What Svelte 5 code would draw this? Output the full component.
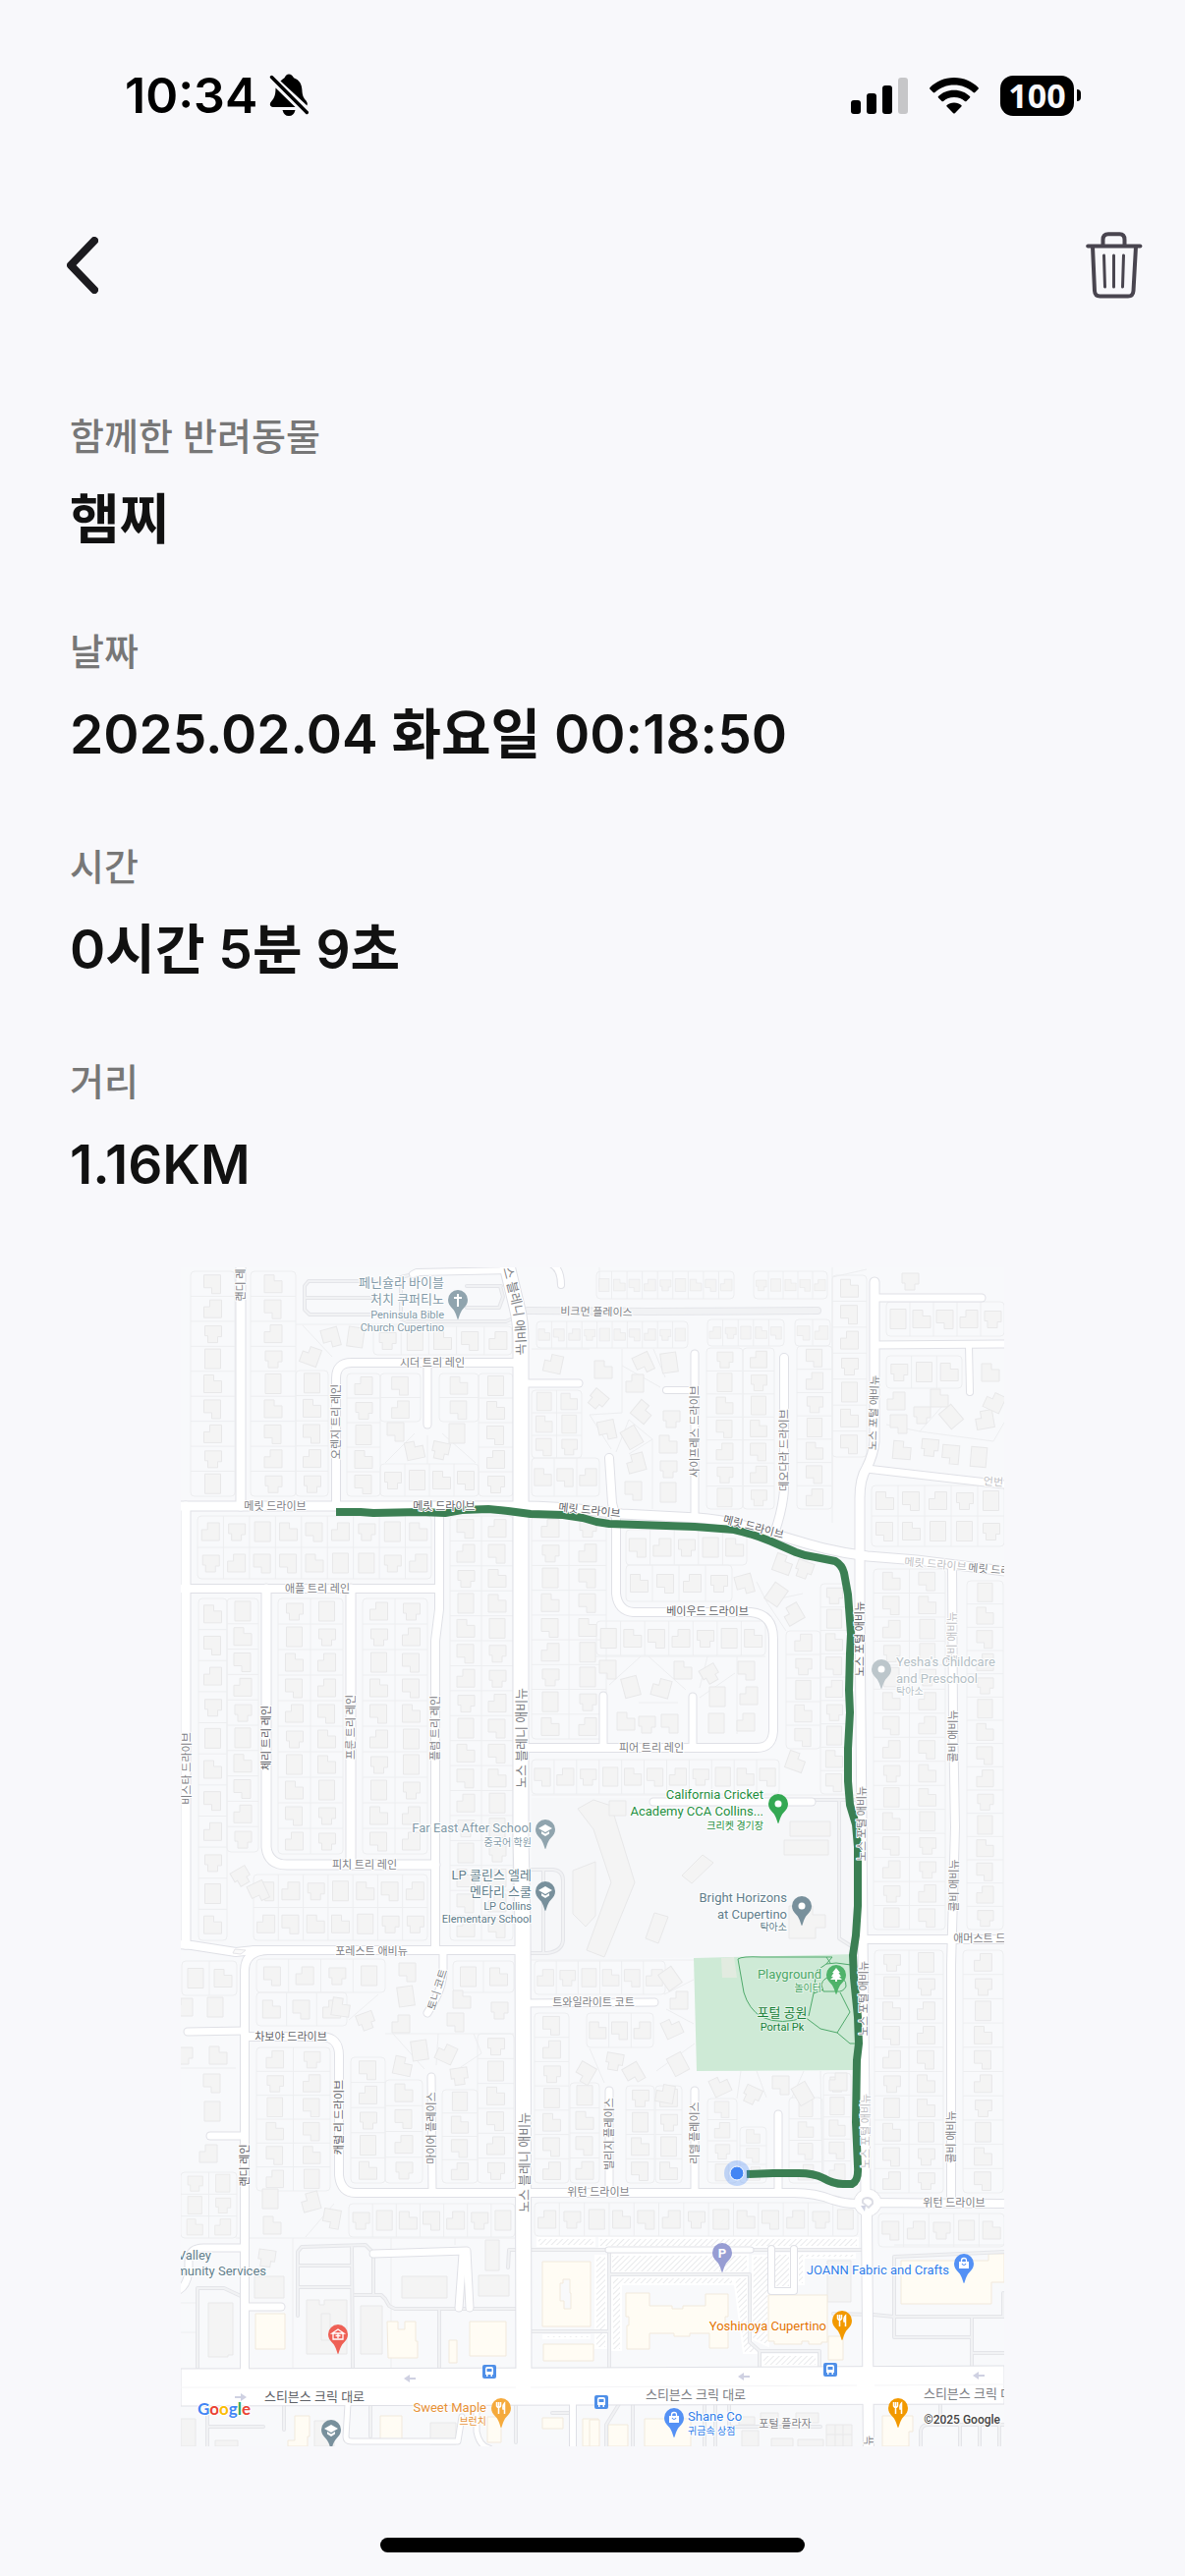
<script>
  const details = [
    { label: '함께한 반려동물', value: '햄찌' },
    { label: '날짜', value: '2025.02.04 화요일 00:18:50' },
    { label: '시간', value: '0시간 5분 9초' },
    { label: '거리', value: '1.16KM' }
  ];

  // Streets: [path, width]
  const streets = [
    ['M245 1280V1533', 9],
    ['M180 1533H530C580 1533 600 1538 633 1541L710 1545C740 1547 770 1556 800 1565C830 1574 850 1580 883 1584L933 1588L1030 1600', 9],
    ['M342 1533V1403Q342 1387 358 1387H530', 8],
    ['M435 1387V1450', 7],
    ['M514 1280L526 1330Q530 1345 530 1365V1870L532 1960L533 2430', 15],
    ['M420 1297L424 1295L518 1293', 6],
    ['M560 1286Q571 1290 571 1308', 6],
    ['M530 1408H589', 7],
    ['M707 1378V1545', 7],
    ['M678 1415H707', 6],
    ['M798 1382V1515Q797 1535 788 1561', 8],
    ['M620 1484L623 1530L627 1545V1622Q629 1640 645 1641H764Q787 1643 787 1668V1762Q786 1779 770 1779H530', 8],
    ['M614 1726V1779', 7],
    ['M705 1727V1779', 7],
    ['M890 1305V1467Q889 1480 882 1494Q875 1505 875 1525V1640L876 1750L878 1970L881 2230', 9],
    ['M890 1321H999', 7],
    ['M890 1369L1030 1368', 7],
    ['M986 1369L987 1417', 6],
    ['M882 1495L1030 1512', 7],
    ['M189 1533V1979', 9],
    ['M184 1617H446', 8],
    ['M271 1617V1880Q273 1898 292 1898H443', 9],
    ['M357 1617V1898', 9],
    ['M447 1533V1638L443 1670V1985', 8],
    ['M180 1979L195 1980L240 1987L258 1985H532', 8],
    ['M272 1985Q249 1986 249 2006V2415', 8],
    ['M191 2068L249 2067', 7],
    ['M214 2174H249', 7],
    ['M249 2073H328Q345 2074 345 2092V2214Q347 2232 362 2232H808Q830 2232 847 2239Q865 2245 883 2242L1030 2243', 8],
    ['M451 1985V2008Q450 2026 435 2049', 7],
    ['M439 2114L440 2232', 7],
    ['M532 2039L666 2038', 7],
    ['M665 1834H826', 7],
    ['M880 1974H1030', 8],
    ['M969 1596L970 1750L972 1860L968 2000L968 2242', 8],
    ['M620 2128V2232', 7],
    ['M707 2128V2232', 7],
    ['M792 2152V2232', 7],
    ['M882 2250L884 2500', 10],
    ['M249 2288H207Q192 2288 192 2302V2312Q190 2328 180 2332', 7],
    ['M252 2348H286', 7],
    ['M380 2294L475 2291L478 2349', 7],
    ['M471 2294L467 2349', 7],
    ['M619 2290H764', 5],
    ['M785 2289V2332H808V2289', 6],
    ['M354 2447L352 2480Q352 2485 358 2485H466L470 2460', 5],
    ['M485 2447V2475Q488 2490 498 2492', 5],
    ['M583 2447V2500', 6]
  ];

  // Driveways and parking lanes
  const lanes = [
    'M380 1304H314L310 1309V1333L315 1338H380M311 1321H380M420 1297L408 1300V1342L414 1345H515L522 1342',
    'M475 1309H510M475 1331H508L512 1320L509 1309',
    'M540 1903H563Q573 1904 573 1914V1975Q572 1986 557 1988H540M553 1903V1988',
    'M828 1832H872M854 1834V1973L868 1982',
    'M201 2410V2329H228L245 2337',
    'M303 2357V2292L307 2287L372 2285L380 2293V2335M303 2306H358M303 2328H358M358 2287L359 2410',
    'M361 2336H388L392 2340L396 2347L402 2350H526M447 2350V2410',
    'M517 2308L518 2290H880M541 2373H620M620 2290V2410M620 2315H763V2384L773 2393H834V2410M773 2393V2410',
    'M848 2355L889 2356L910 2358H1022M910 2358V2297L1022 2292M910 2358V2379H989M989 2358V2409M989 2395H1022M1021 2334V2358',
    'M211 2448V2490M211 2470H268M289 2448V2473M377 2448V2480M525 2448V2486M562 2456H580',
    'M644 2447V2490M630 2447L617 2468V2490M717 2447V2490M728 2447V2490M742 2447V2470H835M957 2447V2468M937 2490V2474Q938 2468 945 2468H1022M977 2468V2490M997 2468V2490M1017 2468V2490'
  ];

  // Parcel blocks: [x0, y0, x1, y1, columns, rows]
  const blocks = [
    [194, 1294, 239, 1523, 1, 9], [255, 1294, 301, 1523, 1, 9], [301, 1395, 334, 1523, 1, 5],
    [380, 1350, 521, 1379, 5, 1], [353, 1398, 387, 1523, 1, 5], [387, 1398, 428, 1447, 1, 2],
    [447, 1398, 487, 1447, 1, 2], [487, 1398, 522, 1523, 1, 5], [387, 1490, 487, 1523, 4, 1],
    [201, 1543, 439, 1607, 9, 2], [458, 1543, 522, 1975, 2, 17],
    [202, 1627, 231, 1975, 1, 11], [231, 1627, 263, 1885, 1, 10],
    [283, 1627, 349, 1887, 2, 10], [369, 1627, 435, 1887, 2, 10], [258, 1908, 435, 1975, 7, 2],
    [546, 1345, 700, 1372, 10, 1], [607, 1294, 747, 1322, 9, 1], [767, 1294, 842, 1322, 5, 1],
    [720, 1343, 798, 1370, 5, 1], [809, 1343, 845, 1370, 2, 1], [541, 1484, 610, 1523, 3, 1],
    [541, 1415, 592, 1484, 2, 3], [719, 1372, 756, 1536, 1, 7], [756, 1372, 788, 1536, 1, 7],
    [811, 1370, 847, 1536, 1, 7], [847, 1298, 882, 1483, 1, 7], [902, 1325, 1022, 1360, 5, 1],
    [902, 1380, 979, 1413, 3, 1], [541, 1543, 617, 1770, 2, 9], [637, 1557, 760, 1593, 5, 1],
    [637, 1593, 745, 1630, 4, 1], [607, 1650, 779, 1685, 7, 1], [835, 1612, 863, 1826, 1, 9],
    [800, 1660, 835, 1780, 1, 5], [541, 1791, 793, 1826, 11, 1], [889, 1597, 962, 1964, 2, 15],
    [984, 1609, 1021, 1964, 1, 15], [890, 1985, 960, 2232, 2, 10], [980, 1985, 1021, 2232, 1, 10],
    [261, 1994, 392, 2028, 4, 1], [261, 2028, 353, 2062, 3, 1], [461, 1996, 523, 2028, 2, 1],
    [486, 2070, 523, 2222, 1, 6], [261, 2084, 336, 2230, 2, 6], [357, 2094, 392, 2222, 1, 5],
    [392, 2117, 430, 2222, 1, 4], [450, 2127, 486, 2222, 1, 4], [355, 2243, 524, 2277, 7, 1],
    [544, 1996, 677, 2030, 6, 1], [544, 2049, 579, 2222, 1, 7], [597, 2049, 665, 2084, 3, 1],
    [580, 2120, 610, 2222, 1, 4], [637, 2123, 666, 2222, 1, 4], [667, 2123, 694, 2222, 1, 4],
    [720, 2136, 750, 2222, 1, 4], [753, 2165, 780, 2222, 1, 3], [803, 2135, 837, 2222, 1, 4],
    [838, 2110, 866, 2222, 1, 5], [544, 2242, 873, 2276, 13, 1], [894, 2253, 1022, 2287, 5, 1],
    [887, 1512, 1022, 1574, 5, 2], [185, 1996, 241, 2031, 2, 1], [184, 2211, 241, 2278, 2, 3]
  ];

  // Detached houses on irregular lots: [x, y, rotation]
  const loose = [
    [337, 1361, -15], [362, 1361, 8], [316, 1380, 20], [422, 1476, -12], [448, 1476, 12], [403, 1457, 0], [465, 1459, 0],
    [563, 1388, 12], [614, 1394, 0], [608, 1424, 40], [655, 1387, -25], [681, 1387, -8], [646, 1408, 0], [654, 1437, 40],
    [683, 1444, 0], [618, 1455, -12], [643, 1463, -30], [647, 1489, -15], [680, 1470, 0], [680, 1495, 0], [645, 1517, 0],
    [680, 1519, 0], [912, 1426, 0], [956, 1423, 0], [938, 1440, 0], [915, 1449, 0], [968, 1442, -40], [1002, 1445, -10],
    [918, 1476, 5], [946, 1473, 5], [968, 1480, 5], [996, 1483, 5], [1012, 1427, 25], [1008, 1397, 0], [926, 1304, 0],
    [758, 1612, -15], [790, 1623, 35], [807, 1643, -30], [797, 1592, 20], [818, 1597, 20], [619, 1699, 0], [642, 1717, -15],
    [673, 1718, 15], [695, 1700, 0], [722, 1704, -30], [760, 1700, 0], [730, 1727, 0], [762, 1726, 0], [637, 1752, 0],
    [658, 1755, 0], [682, 1754, 0], [729, 1754, 0], [759, 1753, 0], [810, 1793, 20], [245, 1910, -30], [263, 1925, -25],
    [219, 2043, 0], [187, 2043, 0], [222, 2092, 0], [187, 2092, 0], [216, 2120, 0], [216, 2149, 0], [212, 2192, 0],
    [347, 2043, 8], [372, 2057, -20], [415, 2007, 0], [413, 2032, -8], [408, 2060, 0], [470, 2035, 0], [508, 2046, 0],
    [464, 2058, 0], [427, 2087, -8], [454, 2090, 25], [410, 2103, 12], [467, 2113, -8], [596, 2110, 30], [275, 2238, 0],
    [316, 2241, -15], [277, 2265, 0], [271, 2298, 8], [338, 2258, 10], [682, 2014, -35], [691, 2036, 0], [684, 2064, -25],
    [625, 2098, 10], [645, 2110, -30], [690, 2101, -28], [677, 2131, 10], [733, 2123, -25], [765, 2132, 25],
    [795, 2122, 0], [817, 2131, -30], [853, 2119, 0]
  ];

  const houseShapes = [
    'M-9 -9H8V10H-1V4H-9Z',
    'M-8 -10H8V10H-8Z',
    'M-9 -2H-3V-9H9V9H-9Z',
    'M-9 -9H1V-3H9V9H-9Z',
    'M-8 -8H9V3H5V9H-5V2H-8Z'
  ];

  const houses = [];
  const parcels = [];
  blocks.forEach(([x0, y0, x1, y1, cols, rows], b) => {
    const cw = (x1 - x0) / cols;
    const ch = (y1 - y0) / rows;
    let d = '';
    for (let c = 1; c < cols; c++) d += `M${x0 + c * cw} ${y0}V${y1}`;
    for (let r = 1; r < rows; r++) d += `M${x0} ${y0 + r * ch}H${x1}`;
    parcels.push({ x: x0, y: y0, w: x1 - x0, h: y1 - y0, d });
    for (let c = 0; c < cols; c++) {
      for (let r = 0; r < rows; r++) {
        const s = Math.min(1, cw / 24, ch / 25);
        houses.push({
          t: `translate(${x0 + (c + 0.5) * cw} ${y0 + (r + 0.5) * ch}) scale(${s})`,
          d: houseShapes[(b * 3 + c * 2 + r * 7 + ((r * c) % 3)) % 5]
        });
      }
    }
  });
  loose.forEach(([x, y, a], i) => houses.push({ t: `translate(${x} ${y}) rotate(${a})`, d: houseShapes[i % 5] }));

  const grayBuildings = [
    'M588 1841L604 1832L622 1838L646 1916L615 1992L597 1985L622 1916L604 1862Z',
    'M583 1904L606 1895L606 1950L596 1961L583 1948Z',
    'M620 1833H637V1848H620ZM804 1854H845V1869H804ZM798 1873H843V1888H798Z',
    'M694 1909L715 1888L726 1896L704 1917Z',
    'M666 1947L680 1951L670 1978L657 1973Z',
    'M803 1940H827V1949H840V1962H830V1973H803Z',
    'M212 2344H237V2397H232V2399H212ZM259 2317H289V2339H259Z',
    'M312 2341H325V2346H330V2341H353V2396H312ZM327 2355H336V2382H327Z',
    'M367 2347H389V2396H367ZM409 2317H455V2339H409ZM494 2280H508V2311H494ZM487 2316H518V2337H487Z',
    'M184 2462H199V2490H184ZM320 2464H340V2490H320ZM438 2466H464V2488H438ZM219 2484H242V2490H219Z',
    'M842 2301H866V2343H842Z',
    'M752 2460H768V2468H752ZM774 2456H792V2466H774ZM810 2456H833V2466H810ZM755 2474H772V2490H755ZM785 2482H807V2490H785ZM812 2483H838V2490H812ZM841 2468H867V2490H841ZM841 2478H867M850 2468V2490M858 2468V2490'
  ];

  const shops = [
    'M260 2355H290V2391H260Z',
    'M394 2363H405V2371H412V2363H423V2383H425V2400H395Z',
    'M478 2363H515V2398H478ZM457 2382H465V2405H457Z',
    'M552 2302H601V2368H552ZM573 2320H580V2334H581V2350H574V2342H570V2324H573Z',
    'M553 2386H604V2403H553Z',
    'M300 2459H315V2480H313V2490H293V2484H300ZM387 2459H409V2485H387ZM496 2460H510V2486H496ZM552 2461H573V2472H552ZM593 2462H609V2490H593Z',
    'M637 2334H661V2347H684V2350H695V2347H718V2335H741V2358H738V2367H741V2390H722V2375H702V2378H686V2375H661V2391H638V2367H640V2358H637Z',
    'M782 2336H842V2384H836V2386H823V2383H816V2386H788V2383H782ZM843 2378H858V2402H843Z',
    'M917 2301H1006V2294H1022V2323H1009V2345H917Z',
    'M656 2462H703V2490H656ZM619 2468H639V2490H619ZM600 2463H610V2490H600ZM898 2459H929V2475H925V2490H898Z'
  ];

  const parking = 'M547 2278H605V2286H547ZM610 2278H873V2287H610ZM622 2295H761V2313H622ZM606 2296H617V2390H606ZM623 2318H746V2325H632V2392H623ZM747 2318H761V2372L770 2395H757ZM766 2296H782V2388L765 2380ZM788 2294H804V2328H788ZM812 2294H870V2298H818V2325H812ZM776 2397H831V2408H776ZM553 2377H600V2380H553Z';

  // Street names: [text, x, y, rotation, tone]
  const names = [
    ['랜디 레', 245, 1308, -90, 'mid'], ['시더 트리 레인', 440, 1387, 0, 'mid'], ['비크먼 플레이스', 607, 1335, 1, 'mid'],
    ['오렌지 트리 레인', 342, 1447, -90, 'mid'], ['메릿 드라이브', 280, 1533, 0, 'mid'], ['메릿 드라이브', 452, 1533, 0, 'dark'],
    ['메릿 드라이브', 600, 1537, 6, 'dark'], ['메릿 드라이브', 767, 1554, 15, 'dark'], ['사이프레스 드라이브', 707, 1457, -90, 'mid'],
    ['데오다라 드라이브', 798, 1476, -90, 'mid'], ['노스 포털 애비뉴', 889, 1438, -88, 'mid'], ['애플 트리 레인', 323, 1617, 0, 'mid'],
    ['체리 트리 레인', 271, 1769, -90, 'dark'], ['프룬 트리 레인', 357, 1758, -90, 'mid'], ['플럼 트리 레인', 443, 1759, -90, 'mid'],
    ['비스타 드라이브', 190, 1800, -90, 'mid'], ['베이우드 드라이브', 720, 1640, 0, 'dark'], ['피어 트리 레인', 663, 1779, 0, 'mid'],
    ['메릿 드라이브', 952, 1592, 5, 'faint'], ['메릿 드라이브', 1017, 1598, 5, 'mid'], ['언번', 1011, 1508, 4, 'faint'],
    ['노스 포털 애비뉴', 875, 1668, -90, 'dark'], ['노스 포털 애비뉴', 877, 1856, -90, 'mid'], ['노스 포털 애비뉴', 879, 2034, -90, 'mid'],
    ['노스 포털 애비뉴', 881, 2169, -90, 'faint'], ['콜비 애비뉴', 969, 1667, -90, 'faint'], ['콜비 애비뉴', 970, 1767, -90, 'mid'],
    ['콜비 애비뉴', 971, 1919, -90, 'mid'], ['콜비 애비뉴', 968, 2175, -90, 'mid'], ['피치 트리 레인', 371, 1898, 0, 'mid'],
    ['포레스트 애비뉴', 378, 1986, 0, 'mid'], ['토니 코트', 445, 2025, -72, 'mid'], ['트와일라이트 코트', 604, 2038, 0, 'mid'],
    ['차보야 드라이브', 296, 2073, 0, 'dark'], ['캐럴 리 드라이브', 345, 2155, -90, 'dark'], ['랜디 레인', 249, 2204, -90, 'dark'],
    ['마이어 플레이스', 439, 2166, -90, 'mid'], ['빌리지 플레이스', 620, 2172, -90, 'mid'], ['리델 플레이스', 707, 2171, -90, 'mid'],
    ['위턴 드라이브', 609, 2231, 0, 'mid'], ['위턴 드라이브', 971, 2242, 0, 'mid'], ['애머스트 드라이브', 1012, 1973, 0, 'mid'],
    ['포털 플라자', 799, 2467, 0, 'mid'], ['뉴', 884, 2484, -90, 'mid']
  ];

  const bigNames = [
    ['노스 블레니 애비뉴', 530, 1769, -90, 'mid'], ['노스 블레니 애비뉴', 533, 2201, -90, 'mid'],
    ['스티븐스 크릭 대로', 320, 2439, 0, 'dark'], ['스티븐스 크릭 대로', 708, 2437, 0, 'mid'], ['스티븐스 크릭 대로', 991, 2436, 0, 'mid']
  ];

  const pins = [
    { x: 466, y: 1323, c: '#90a4ae', i: 'cross' }, { x: 555, y: 1862, c: '#90a4ae', i: 'cap' },
    { x: 555, y: 1925, c: '#78909c', i: 'cap' }, { x: 792, y: 1836, c: '#34a853', i: 'dot' },
    { x: 897, y: 1699, c: '#bcc6cb', i: 'dot' }, { x: 816, y: 1940, c: '#78909c', i: 'dot' },
    { x: 851, y: 2010, c: '#4fb36a', i: 'tree' }, { x: 344, y: 2376, c: '#ee6055', i: 'care' },
    { x: 510, y: 2451, c: '#f5aa3c', i: 'fork' }, { x: 337, y: 2473, c: '#78909c', i: 'cap' },
    { x: 735, y: 2293, c: '#979dd3', i: 'park' }, { x: 981, y: 2304, c: '#5491f5', i: 'bag' },
    { x: 857, y: 2362, c: '#f29900', i: 'fork' }, { x: 914, y: 2451, c: '#f29900', i: 'fork' },
    { x: 686, y: 2461, c: '#5491f5', i: 'bag' }
  ];

  // Place labels: [text, x, baseline, anchor, size, colour]
  const places = [
    ['페닌슐라 바이블', 452, 1310, 'end', 'lg', '#829aa8'], ['처치 쿠퍼티노', 452, 1327, 'end', 'lg', '#829aa8'],
    ['Peninsula Bible', 452, 1342, 'end', 'md', '#829aa8'], ['Church Cupertino', 452, 1355, 'end', 'md', '#829aa8'],
    ['Far East After School', 541, 1865, 'end', 'lg', '#829aa8'], ['중국어 학원', 541, 1879, 'end', 'sm', '#829aa8'],
    ['LP 콜린스 엘레', 541, 1913, 'end', 'lg', '#607d8b'], ['멘타리 스쿨', 541, 1930, 'end', 'lg', '#607d8b'],
    ['LP Collins', 541, 1944, 'end', 'md', '#607d8b'], ['Elementary School', 541, 1957, 'end', 'md', '#607d8b'],
    ['California Cricket', 777, 1831, 'end', 'lg', '#1e8e3e'], ['Academy CCA Collins...', 777, 1848, 'end', 'lg', '#1e8e3e'],
    ['크리켓 경기장', 777, 1862, 'end', 'sm', '#1e8e3e'],
    ["Yesha's Childcare", 912, 1696, 'start', 'lg', '#b4c0c6'], ['and Preschool', 912, 1713, 'start', 'lg', '#b4c0c6'],
    ['탁아소', 912, 1725, 'start', 'sm', '#b4c0c6'],
    ['Bright Horizons', 801, 1936, 'end', 'lg', '#607d8b'], ['at Cupertino', 801, 1953, 'end', 'lg', '#607d8b'],
    ['탁아소', 801, 1965, 'end', 'sm', '#607d8b'],
    ['Playground', 836, 2014, 'end', 'lg park', '#4ba766'], ['놀이터', 836, 2027, 'end', 'sm park', '#4ba766'],
    ['포털 공원', 796, 2053, 'middle', 'lg park', '#188038'], ['Portal Pk', 796, 2067, 'middle', 'md park', '#188038'],
    ['Valley', 215, 2300, 'end', 'lg', '#607d8b'], ['Community Services', 271, 2316, 'end', 'lg', '#607d8b'],
    ['Sweet Maple', 495, 2455, 'end', 'lg', '#e69138'], ['브런치', 495, 2468, 'end', 'sm', '#e69138'],
    ['JOANN Fabric and Crafts', 966, 2315, 'end', 'lg', '#2f7de9'], ['Yoshinoya Cupertino', 841, 2372, 'end', 'lg', '#e37400'],
    ['Shane Co', 700, 2464, 'start', 'lg', '#2f7de9'], ['귀금속 상점', 700, 2478, 'start', 'sm', '#2f7de9']
  ];

  const stops = [[498, 2414], [612, 2445], [845, 2412]];
  const arrows = [[417, 2421, 0], [245, 2440, 180], [757, 2419, 0], [996, 2418, 0]];
</script>

<div class="screen">
  <header class="status">
    <div class="clock">
      <time>10:34</time>
      <svg class="bell" viewBox="0 0 40 44" aria-label="무음">
        <path d="M11.5 7.5Q14 5.4 15.5 4.3Q17 .5 20 .5Q23.2 .5 25 4.3C31 6.5 33 11 33.4 16.5C33.6 22 35 25 37.5 27.5Q39.6 30 38.5 32.5ZM6.5 14.500L26.500 34H4Q.8 33.600 .8 31Q.8 29.500 2.500 27.800C5.500 24.500 6.500 21 6.500 14.500ZM13.500 37H26.500Q25 43 20 43Q15 43 13.500 37Z" />
        <path d="M2.5 3.5L38.300 39.500" fill="none" stroke="#000" stroke-width="3.400" stroke-linecap="round" />
      </svg>
    </div>
    <div class="radios">
      <svg class="signal" viewBox="0 0 58 37" aria-label="신호">
        <rect x="0" y="23" width="10" height="14" rx="3" />
        <rect x="16" y="16" width="10" height="21" rx="3" />
        <rect x="32" y="8" width="10" height="29" rx="3" />
        <rect x="48" y="0" width="10" height="37" rx="3" fill="#c6c6c8" />
      </svg>
      <svg class="wifi" viewBox="0 0 50 37" aria-label="Wi-Fi">
        <path d="M25 0C35 0 43.500 4 49.500 10Q50.300 11 49.500 11.800L46.300 15Q45.500 15.800 44.500 15C39 10 32.500 7.500 25 7.500S11 10 5.500 15Q4.500 15.800 3.700 15L.5 11.800Q-.3 11 .5 10C6.500 4 15 0 25 0Z" />
        <path d="M25 12.700C31.500 12.700 37 15 41 19Q41.800 19.800 41 20.600L37.500 24Q36.800 24.700 35.900 24C33 21.300 29.500 20 25 20S17 21.300 14.100 24Q13.200 24.700 12.500 24L9 20.600Q8.200 19.800 9 19C13 15 18.500 12.700 25 12.700Z" />
        <path d="M25 25.500C28 25.500 30.500 26.500 32.300 28Q33.200 28.800 32.400 29.600L25.800 36.200Q25 37 24.200 36.200L17.600 29.600Q16.800 28.800 17.700 28C19.500 26.500 22 25.500 25 25.500Z" />
      </svg>
      <div class="battery"><span class="charge">100</span><span class="nub"></span></div>
    </div>
  </header>

  <nav class="toolbar">
    <button type="button" aria-label="뒤로">
      <svg class="back" viewBox="0 0 32 58"><path d="M28 4L4 29L28 54" /></svg>
    </button>
    <button type="button" aria-label="삭제">
      <svg class="trash" viewBox="0 0 58 68">
        <path d="M2.200 14.500H55.400" />
        <path d="M17.500 13V8Q17.500 2.200 23 2.200H34.500Q39.500 2.200 39.500 8V13" />
        <path d="M7 15L9 60Q9.300 65.500 14.500 65.500H43Q48.200 65.500 48.500 60L51 15" />
        <path class="thin" d="M18.500 24L19.500 56M28.500 24V56M38.500 24L37.500 56" />
      </svg>
    </button>
  </nav>

  <main>
    <dl>
      {#each details as item}
        <div class="item">
          <dt>{item.label}</dt>
          <dd>{item.value}</dd>
        </div>
      {/each}
    </dl>

    <svg class="map" viewBox="184 1290 838 1200" role="img" aria-label="산책 경로 지도">
      <defs>
        <pattern id="hatch" width="4" height="4" patternUnits="userSpaceOnUse" patternTransform="rotate(45)">
          <rect width="4" height="4" fill="#fff" />
          <path d="M0 0V4" stroke="#e9eaec" stroke-width="2" />
        </pattern>
        <path id="blaney" d="M512 1291L520 1322Q526 1345 526 1400" />
      </defs>
      <rect x="184" y="1290" width="838" height="1200" fill="#f8f9fb" />
      <path d="M541 1830H872V1990L541 1995Z" fill="#f6f7f9" />

      {#each parcels as p}
        <rect class="parcel" x={p.x} y={p.y} width={p.w} height={p.h} rx="4" />
        <path class="parcel" d={p.d} />
      {/each}
      <path class="parcel" d="M308 1349L338 1381M301 1348H521M392 1489L422 1459M484 1489L450 1459M435 1461V1490M541 1373H600M610 1290V1310M633 1373V1438L600 1440M633 1390L672 1412M665 1373L677 1402M600 1440L622 1475M640 1445L627 1478M640 1445L664 1465V1536M664 1465L640 1480M605 1686H779M652 1686L620 1715M660 1686L698 1720M720 1686L712 1718M748 1703L712 1728M750 1686V1765M650 1733H690M800 1660L780 1630L817 1622M780 1630L770 1610M400 2070L432 2106M446 2070L444 2102M482 2070L490 2090L460 2110M392 2070H523M355 2056L385 2030M311 2277L340 2243M240 2278H524M298 2278V2410M398 2278V2410M463 2278V2285M541 1995H706M706 2015L676 2030M706 2060L678 2045M668 2108L707 2080M600 2085L615 2120M754 2108L750 2136M770 2108L780 2135M818 2108L806 2135M835 2108L837 2222M910 2285H1022M847 1290V1550M882 1292L847 1300M936 1457L960 1430M936 1457L1011 1467L1022 1448M936 1457L902 1450M541 1827H872M184 2105H240M184 2344H200M184 2374H200" />

      {#each houses as h}
        <path class="building" d={h.d} transform={h.t} />
      {/each}
      {#each grayBuildings as d}<path class="building" {d} />{/each}
      <path d={parking} fill="url(#hatch)" stroke="#fff" stroke-width="2" />
      {#each shops as d}<path class="shop" {d} fill-rule="evenodd" />{/each}

      <path d="M706 1993L870 1989V2107L709 2108Z" fill="#ceead6" />
      <path d="M734 1993L747 1992L750 2013H735Z" fill="#e2ebe0" />
      <path class="trail" d="M751 1994Q755 1991 775 1992H847L841 1999L851 1998L866 2000M841 1999L831 2006Q829 2020 828 2029L823 2052M751 1994L757 2028Q762 2045 775 2053Q796 2062 819 2053L835 2065L852 2069L865 2048L855 2028M852 2069L865 2080H870M841 1992L845 1998M836 2020Q838 2012 848 2012Q862 2012 861 2022Q858 2028 851 2027H838ZM828 2029L838 2025" />

      {#each lanes as d}<path class="lane-case" {d} />{/each}
      {#each lanes as d}<path class="lane" {d} />{/each}
      <path class="lane-case wide" d="M537 1334L660 1335L832 1334" />
      <path class="lane mid-width" d="M537 1334L660 1335L832 1334" />

      {#each streets as [d, w]}<path class="case" {d} stroke-width={w + 2} />{/each}
      <path d="M184 2411L600 2410L1022 2408V2447L184 2449Z" fill="#fff" stroke="#dfe0e6" />
      <circle cx="883" cy="2242" r="14" fill="#fff" stroke="#dfe0e6" />
      {#each streets as [d, w]}<path class="street" {d} stroke-width={w} />{/each}
      <circle cx="883" cy="2242" r="13" fill="#fff" />
      <path d="M878 2242Q877 2237 883 2237Q889 2238 888 2243L884 2247Z" fill="#fff" stroke="#dcdde5" stroke-width="2" />
      <path d="M876 2245L881 2245L880 2251Z" fill="#cfd2e2" />
      <path d="M184 2430H525M540 2430L872 2428M890 2428L1022 2427" stroke="#f4f4f6" />
      <path d="M239 1984L250 1985L245 1989L237 1988Z" fill="#fafafa" stroke="#e4e4e8" />

      {#each arrows as [x, y, a]}
        <path transform="translate({x} {y}) rotate({a})" d="M-6 0L0 -4V-1H6V1H0V4Z" fill="#cfd1e2" />
      {/each}

      <path
        class="route"
        d="M342 1539L367 1539L380 1540L427 1539L453 1540L470 1537L497 1536L517 1538L540 1541L573 1542L593 1545L607 1549L620 1551L707 1554L747 1557Q765 1561 785 1569L810 1580Q820 1584 830 1585L850 1589Q857 1593 859 1601L863 1623L866 1663L865 1683L864 1720L865 1743L863 1780V1813L865 1837L871 1857L873 1880L873 1940L871 1970L868 1990L869 2013L873 2053L874 2080L872 2097L871 2160L873 2205Q874 2220 867 2223H858Q848 2223 838 2217Q828 2212 813 2212H787L760 2213"
      />

      {#each names as [text, x, y, a, tone]}
        <text class="name {tone}" transform="translate({x} {y}) rotate({a})" dy="4">{text}</text>
      {/each}
      {#each bigNames as [text, x, y, a, tone]}
        <text class="name big {tone}" transform="translate({x} {y}) rotate({a})" dy="5">{text}</text>
      {/each}
      <text class="name big mid path-name"><textPath href="#blaney">스 블레니 애비뉴</textPath></text>

      <circle cx="750" cy="2212" r="13" fill="#4285f4" opacity=".3" />
      <circle cx="750" cy="2212" r="7" fill="#4285f4" stroke="#fff" stroke-width="1" />

      {#each stops as [x, y]}
        <g transform="translate({x} {y})">
          <rect x="-7" y="-7" width="14" height="14" rx="2" fill="#4f8fe8" />
          <path d="M-4 3V-3Q-4 -5 -2 -5H2Q4 -5 4 -3V3H3V5H1.500V3H-1.500V5H-3V3Z" fill="#fff" />
          <path d="M-2.500 -3H2.500V0H-2.500Z" fill="#4f8fe8" />
        </g>
      {/each}

      {#each pins as p}
        <g transform="translate({p.x} {p.y})">
          <path d="M0 20C-1 20 -1.500 13 -5.500 9C-8.500 6 -10 3.500 -10 0A10 10 0 0 1 10 0C10 3.500 8.500 6 5.500 9C1.500 13 1 20 0 20Z" fill={p.c} />
          {#if p.i === 'dot'}
            <circle r="3.500" fill="#fff" />
          {:else if p.i === 'cross'}
            <path d="M0 -6V7M-4 -2H4" stroke="#fff" stroke-width="2" />
          {:else if p.i === 'cap'}
            <path d="M-7 -1L0 -5L7 -1L0 3ZM-4 2L0 4.500L4 2V4.500L0 7L-4 4.500Z" fill="#fff" />
          {:else if p.i === 'tree'}
            <path d="M0 -7L4 -2H2.500L5 2H3L6 5H1V7H-1V5H-6L-3 2H-5L-2.500 -2H-4Z" fill="#fff" />
          {:else if p.i === 'care'}
            <path d="M-5 -1V5H5V-1M-6 -1L0 -5L6 -1Z" fill="none" stroke="#fff" stroke-width="1.300" />
            <path d="M0 -1V4M-2.500 1.500H2.500" stroke="#fff" stroke-width="1.300" />
          {:else if p.i === 'fork'}
            <path d="M-4.500 -6V-2Q-2.500 1 -.5 -2V-6M-2.500 -6V6M3.500 6V-5Q1.500 -3 2 1H3.500" fill="none" stroke="#fff" stroke-width="1.500" />
          {:else if p.i === 'bag'}
            <path d="M-5 -2H5V5H-5Z" fill="#fff" />
            <path d="M-2.500 -2V-3Q-2.500 -5.500 0 -5.500T2.500 -3V-2" fill="none" stroke="#fff" stroke-width="1.300" />
            <path d="M-2 0Q0 3 2 0" fill="none" stroke={p.c} stroke-width="1.200" />
          {:else}
            <text class="pin-letter" y="5">P</text>
          {/if}
        </g>
      {/each}

      {#each places as [text, x, y, anchor, size, color]}
        <text class="place {size}" {x} {y} text-anchor={anchor} fill={color}>{text}</text>
      {/each}

      <text class="google" x="201" y="2458"
        ><tspan fill="#4285f4">G</tspan><tspan fill="#ea4335">o</tspan><tspan fill="#fbbc04">o</tspan><tspan fill="#4285f4">g</tspan><tspan fill="#34a853">l</tspan><tspan fill="#ea4335">e</tspan></text
      >
      <text class="credit" x="1018" y="2467">©2025 Google</text>
    </svg>
  </main>

  <footer><span class="home"></span></footer>
</div>

<style>
  :global(body) {
    margin: 0;
    background: #f8f8fb;
  }
  .screen {
    min-height: 100vh;
    box-sizing: border-box;
    display: flex;
    flex-direction: column;
    background: #f8f8fb;
    font-family: Inter, 'Noto Sans CJK KR', sans-serif;
    color: #111;
  }
  svg {
    display: block;
  }
  .status {
    display: flex;
    justify-content: space-between;
    align-items: center;
    padding: 65px 106px 0 127px;
    height: 64px;
    color: #000;
  }
  .clock {
    display: flex;
    align-items: center;
    gap: 12px;
  }
  time {
    font-size: 50px;
    line-height: 64px;
    font-weight: 600;
  }
  .bell {
    width: 40px;
    height: 44px;
  }
  .radios {
    display: flex;
    align-items: center;
    gap: 22px;
  }
  .signal {
    width: 58px;
    height: 37px;
  }
  .wifi {
    width: 50px;
    height: 37px;
  }
  .battery {
    display: flex;
    align-items: center;
    gap: 3px;
  }
  .charge {
    width: 75px;
    border-radius: 13px;
    background: #000;
    color: #f8f8fb;
    font-family: 'Open Sans', sans-serif;
    font-weight: 700;
    font-size: 34px;
    line-height: 41px;
    text-align: center;
  }
  .nub {
    width: 4px;
    height: 12px;
    border-radius: 0 4px 4px 0;
    background: #000;
  }
  .toolbar {
    display: flex;
    justify-content: space-between;
    align-items: center;
    padding: 101px 35px 0 60px;
    height: 80px;
  }
  button {
    border: 0;
    padding: 6px 8px;
    background: none;
  }
  .back {
    width: 32px;
    height: 58px;
    fill: none;
    stroke: #1c1b1f;
    stroke-width: 8;
    stroke-linecap: round;
    stroke-linejoin: round;
  }
  .trash {
    width: 58px;
    height: 68px;
    fill: none;
    stroke: #49454f;
    stroke-width: 4;
    stroke-linecap: round;
  }
  .thin {
    stroke-width: 3;
  }
  main {
    padding: 106px 71px 0;
  }
  dl {
    margin: 0;
    display: flex;
    flex-direction: column;
    gap: 67px;
  }
  .item {
    display: flex;
    flex-direction: column;
    gap: 16px;
  }
  dt {
    font-size: 38px;
    line-height: 56px;
    font-weight: 500;
    color: #777;
  }
  dd {
    margin: 0;
    font-size: 55px;
    line-height: 80px;
    font-weight: 600;
  }
  .map {
    width: 100%;
    max-width: 838px;
    margin: 65px auto 0;
    font-family: Roboto, 'Noto Sans CJK KR', sans-serif;
  }
  .parcel {
    fill: none;
    stroke: #edeef0;
    stroke-width: 1;
  }
  .building {
    fill: #f4f4f4;
    stroke: #e8e8e9;
    stroke-width: 1;
  }
  .shop {
    fill: #fffcf4;
    stroke: #f1e9dc;
    stroke-width: 1;
  }
  .trail {
    fill: none;
    stroke: #4fa96b;
    stroke-width: 1;
  }
  .case,
  .street,
  .lane,
  .lane-case {
    fill: none;
    stroke-linecap: round;
    stroke-linejoin: round;
  }
  .case {
    stroke: #dfe0e6;
  }
  .street {
    stroke: #fff;
  }
  .lane-case {
    stroke: #e4e5e9;
    stroke-width: 4;
  }
  .lane {
    stroke: #f1f2f4;
    stroke-width: 2;
  }
  .lane-case.wide {
    stroke-width: 8;
  }
  .lane.mid-width {
    stroke-width: 6;
  }
  .route {
    fill: none;
    stroke: #3b7f53;
    stroke-width: 8;
    stroke-linejoin: round;
  }
  .name,
  .place {
    paint-order: stroke;
    stroke: #fff;
    stroke-width: 2;
    stroke-linejoin: round;
  }
  .name {
    font-size: 11px;
    text-anchor: middle;
  }
  .big {
    font-size: 13px;
  }
  .path-name {
    text-anchor: start;
  }
  .dark {
    fill: #5f6267;
  }
  .mid {
    fill: #7d8085;
  }
  .faint {
    fill: #bfc1c5;
  }
  .lg {
    font-size: 13px;
  }
  .md {
    font-size: 11px;
  }
  .sm {
    font-size: 10px;
  }
  .park {
    stroke: #e3f3e7;
  }
  .pin-letter {
    font-size: 13px;
    font-weight: 700;
    text-anchor: middle;
    fill: #fff;
  }
  .google {
    font-family: Lato, sans-serif;
    font-size: 17px;
    font-weight: 700;
    paint-order: stroke;
    stroke: #fff;
    stroke-width: 2;
  }
  .credit {
    font-size: 12px;
    font-weight: 500;
    text-anchor: end;
    fill: #444;
    paint-order: stroke;
    stroke: #fff;
    stroke-width: 2;
  }
  footer {
    margin-top: auto;
    padding-bottom: 24px;
    display: flex;
    justify-content: center;
  }
  .home {
    width: 432px;
    height: 15px;
    border-radius: 8px;
    background: #000;
  }
</style>
